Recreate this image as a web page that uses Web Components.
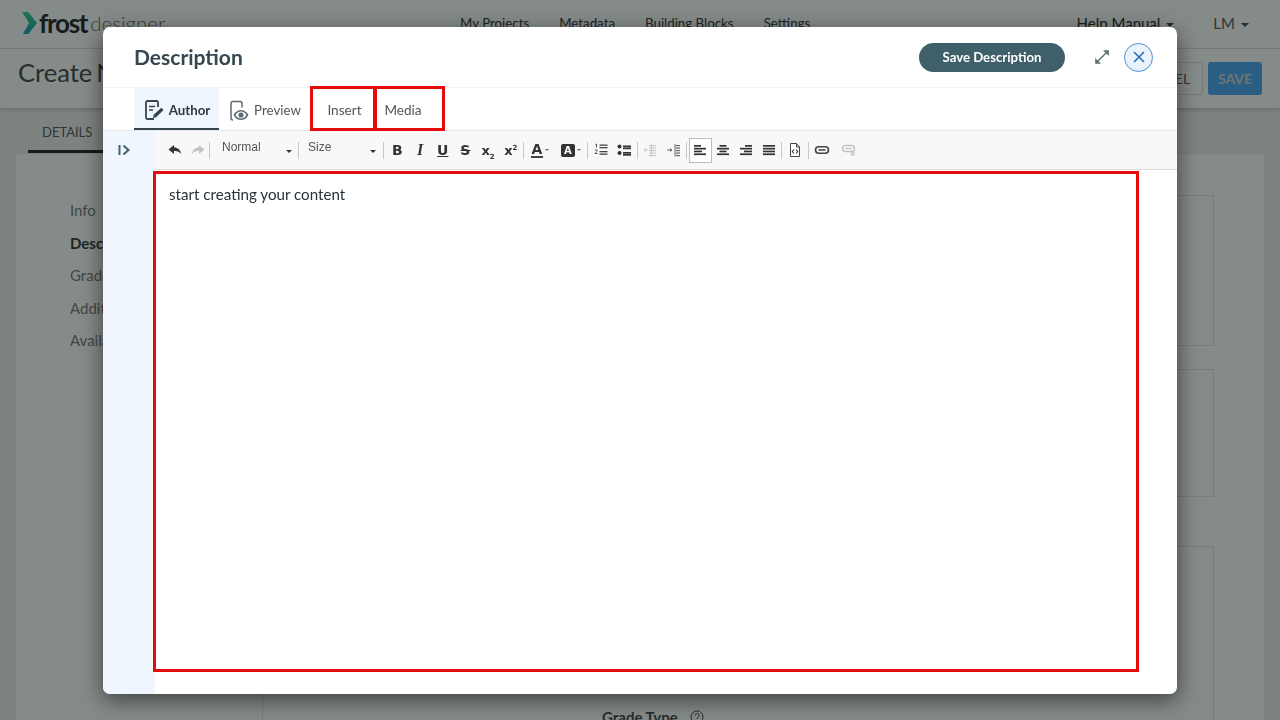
<!DOCTYPE html>
<html lang="en">
<head>
<meta charset="utf-8">
<title>Frost Designer</title>
<style>
html, body { margin: 0; height: 100%; overflow: hidden; }
body { font-family: Lato, "Liberation Sans", sans-serif; color: #333; }
</style>
</head>
<body>
<fd-backdrop-page></fd-backdrop-page>
<fd-scrim></fd-scrim>
<fd-modal heading="Description">
  <fd-editor-toolbar slot="toolbar"></fd-editor-toolbar>
  start creating your content
</fd-modal>

<script>
// small helper so every element just declares its html
class Base extends HTMLElement {
    html() { return "" }
    constructor() {
        super()
        this.attachShadow({ mode: "open" }).innerHTML = this.html()
    }
}

class BackdropPage extends Base {
    html() { return `
<style>
:host { display: flex; flex-direction: column; width: 1280px; height: 720px; overflow: hidden; background: #f1efef; position: relative; }
.top { display: flex; align-items: center; flex: none; background: #fff; border-bottom: 1px solid #dedede; padding: 0 31px 2px 22px; box-sizing: border-box; height: 49px; font-size: 13.300px; color: #333; }
.logo { display: flex; align-items: center; width: 438px; flex: none; }
.logo svg { margin-right: 1px; }
.frost { font-weight: 700; font-size: 26px; letter-spacing: -1.300px; color: #222; }
.designer { font-weight: 300; font-size: 20.500px; color: #666; margin-left: 3px; }
.nav { display: flex; gap: 30px; flex: 1; }
.help { margin-right: 39px; font-size: 15px; color: #222; }
.caret { display: inline-block; border: 4px solid transparent; border-top-color: #444; border-bottom: 0; margin-left: 6px; vertical-align: middle; }
.user { font-size: 15px; color: #555; }
.title { display: flex; align-items: center; height: 59px; flex: none; background: #fff; padding: 0 18px; box-shadow: 0 2px 4px rgba(0,0,0,.18); position: relative; }
h1 { flex: 1; margin: 0 0 14px; font-size: 25.500px; font-weight: 400; word-spacing: -2.500px; color: #444; }
.btn { height: 33px; box-sizing: border-box; display: flex; align-items: center; justify-content: center; border-radius: 3px; font-size: 14px; }
.cancel { width: 80px; border: 1px solid #ddd; color: #555; margin-right: 5px; }
.save { width: 54px; background: #4aa5f5; color: #d0d0d0; font-weight: 700; }
.tabs { height: 45px; flex: none; padding: 0 28px; display: flex; }
.tab { width: 240px; height: 37px; border-bottom: 3px solid #222; color: #555; font-size: 13px; display: flex; align-items: center; padding: 5px 0 0 14px; box-sizing: content-box; }
.panel { flex: 1; margin: 0 15px; background: #fff; border: 1px solid #eaeaea; display: flex; }
.side { width: 246px; flex: none; padding: 47px 0 0 54px; box-sizing: border-box; font-size: 15px; color: #777; display: flex; flex-direction: column; gap: 14.600px; }
.side b { color: #333; }
.content { flex: 1; padding: 41px 50px 0 0; display: flex; flex-direction: column; align-items: flex-end; }
.card { width: 952px; border: 1px solid #e2e2e2; box-sizing: border-box; flex: none; }
.grade { position: absolute; left: 602px; top: 708px; font-size: 15px; font-weight: 700; color: #444; display: flex; gap: 12px; align-items: center; }
</style>
<div class="top">
  <div class="logo">
    <svg width="16" height="22" viewBox="0 0 18 23" preserveAspectRatio="none">
      <defs><linearGradient id="lg" x1="0" y1="0" x2="0" y2="1"><stop offset="0" stop-color="#35d08a"/><stop offset="1" stop-color="#12a0b0"/></linearGradient></defs>
      <path d="M0 0h7l10 11.500L7 23H1l7-11.500z" fill="url(#lg)"/>
    </svg>
    <span class="frost">frost</span><span class="designer">designer</span>
  </div>
  <div class="nav"><span>My Projects</span><span>Metadata</span><span>Building Blocks</span><span>Settings</span></div>
  <span class="help">Help Manual<i class="caret"></i></span>
  <span class="user">LM<i class="caret"></i></span>
</div>
<div class="title">
  <h1>Create New</h1>
  <div class="btn cancel">CANCEL</div>
  <div class="btn save">SAVE</div>
</div>
<div class="tabs"><div class="tab">DETAILS</div></div>
<div class="panel">
  <div class="side"><span>Info</span><b>Description</b><span>Grade</span><span>Additional</span><span>Availability</span></div>
  <div class="content">
    <div class="card" style="height:151px"></div>
    <div class="card" style="height:128px;margin-top:23px"></div>
    <div class="card" style="height:200px;margin-top:49px"></div>
  </div>
</div>
<div class="grade">Grade Type
  <svg width="14" height="14" viewBox="0 0 14 14" fill="none" stroke="#444"><circle cx="7" cy="7" r="6"/><path d="M5 5.500a2 2 0 1 1 3 1.700c-.7.4-1 .8-1 1.600M7 10.200v1"/></svg>
</div>
`}
}
customElements.define("fd-backdrop-page", BackdropPage)

class Scrim extends Base {
    html() { return `<style>:host { display: block; position: fixed; inset: 0; background: rgba(12,24,20,.5); }</style>` }
}
customElements.define("fd-scrim", Scrim)

class Tab extends Base {
    html() { return `
<style>
:host { display: flex; align-items: center; justify-content: center; gap: 4px; height: 42px; box-sizing: border-box; font-size: 13.600px; color: #555; flex: none; }
:host([active]) { background: #eff6fd; color: #2b3a42; font-weight: 700; border-bottom: 2px solid #33444c; }
</style>
<slot name="icon"></slot><slot></slot>
`}
}
customElements.define("fd-tab", Tab)

class Modal extends Base {
    html() { return `
<style>
:host { display: flex; flex-direction: column; position: fixed; left: 103px; top: 27px; width: 1074px; height: 667px; background: #fff; border-radius: 7px; box-shadow: 0 6px 22px rgba(0,0,0,.55); overflow: hidden; }
header { display: flex; align-items: center; height: 61px; flex: none; box-sizing: border-box; padding: 0 24px 0 31px; border-bottom: 1px solid #f2f2f2; }
h2 { flex: 1; margin: 0 0 2px; font-size: 21px; font-weight: 700; color: #37474f; }
.pill { width: 146px; height: 29px; box-sizing: border-box; border: 0; border-radius: 15px; background: #3f5f6b; color: #fff; font: 700 13.200px Lato, sans-serif; padding: 0; margin-right: 2px; }
.expand { margin: 0 14px 0 27px; display: block; }
.close { width: 29px; height: 29px; box-sizing: border-box; border-radius: 50%; border: 1.500px solid #4a8fd0; background: #eaf3fc; display: flex; align-items: center; justify-content: center; }
nav { display: flex; height: 43px; flex: none; box-sizing: border-box; padding-left: 31px; border-bottom: 1px solid #e9e9e9; }
fd-tab { padding-top: 1px; }
.body { flex: 1; display: flex; min-height: 0; }
aside { width: 52px; flex: none; background: #eff6fe; padding: 13px 0 0 15px; box-sizing: border-box; }
aside svg { display: block; }
main { flex: 1; display: flex; flex-direction: column; min-width: 0; }
.text { flex: 1; padding: 15px 14px; font-size: 15.150px; line-height: 18px; color: #263238; }
.mark { position: absolute; box-sizing: border-box; border: 3px solid #e30b0b; pointer-events: none; }
</style>
<header>
  <h2></h2>
  <button class="pill">Save Description</button>
  <svg class="expand" width="16" height="16" viewBox="0 0 16 16" fill="none" stroke="#5f6f6f" stroke-width="1.500">
    <path d="M2 14 14 2"/>
    <path d="M9 1.200h5.800V7z" fill="#5f6f6f" stroke="none"/><path d="M1.200 9v5.800H7z" fill="#5f6f6f" stroke="none"/>
  </svg>
  <div class="close"><svg width="12" height="12" viewBox="0 0 12 12" stroke="#2a6fbb" stroke-width="1.600"><path d="M1 1l10 10M11 1 1 11"/></svg></div>
</header>
<nav>
  <fd-tab active style="width:85px;font-size:13.300px;padding-top:3px">
    <svg slot="icon" width="22" height="22" viewBox="0 0 22 22" fill="none" stroke="#37474f" stroke-width="1.800">
      <path d="M11 20H4.500A1.500 1.500 0 0 1 3 18.500V3.500A1.500 1.500 0 0 1 4.500 2h9A1.500 1.500 0 0 1 15 3.500V8"/>
      <path d="M6 7.500h6M6 11h4" stroke-width="1.400"/>
      <path d="M10 19l.7-3.200 7.600-7 2.200 2.200-7.300 7.200z" fill="#37474f" stroke="none"/>
    </svg>
    Author
  </fd-tab>
  <fd-tab style="width:91px;font-size:13.300px">
    <svg slot="icon" width="22" height="24" viewBox="0 0 22 24" fill="none" stroke="#5b6b70" stroke-width="1.500">
      <path d="M3 20V5.500A2 2 0 0 1 5 3.500h7a2 2 0 0 1 2 2v4"/>
      <path d="M5 22a2 2 0 0 1-2-2"/>
      <path d="M6.500 17c1.800-3 3.800-4.300 6.500-4.300s4.700 1.300 6.500 4.300c-1.800 3-3.800 4.300-6.500 4.300S8.300 20 6.500 17z" fill="#fff"/>
      <circle cx="13" cy="17" r="1.800" fill="#5b6b70"/>
    </svg>
    Preview
  </fd-tab>
  <fd-tab style="width:65px;padding-left:4px">Insert</fd-tab>
  <fd-tab style="width:56px;padding-left:0">Media</fd-tab>
</nav>
<div class="body">
  <aside>
    <svg width="13" height="12" viewBox="0 0 13 12" fill="none" stroke="#46606c" stroke-width="2"><path d="M1.500 1v10"/><path d="M5.500 1.500 10.500 6l-5 4.500" /></svg>
  </aside>
  <main>
    <slot name="toolbar"></slot>
    <div class="text"><slot></slot></div>
  </main>
</div>
<div class="mark" style="left:207px;top:59px;width:66px;height:45px"></div>
<div class="mark" style="left:271px;top:59px;width:71px;height:45px"></div>
<div class="mark" style="left:50px;top:144px;width:986px;height:501px"></div>
`}
    connectedCallback() {
        this.shadowRoot.querySelector("h2").textContent = this.getAttribute("heading")
    }
}
customElements.define("fd-modal", Modal)

// paths for the toolbar buttons, 16x16 box
const lines = (rows, c = "#333") => rows.map(([x, y, w, h]) => `<rect x="${x}" y="${y}" width="${w}" height="${h || 1.700}" fill="${c}"/>`).join("")
const ICONS = {
    undo: `<path d="M7 3 1.500 7.500 7 12V9c3-.3 5.500.6 7 3-.3-4-3-6.500-7-6.800z" fill="#333"/>`,
    redo: `<path d="M9 3l5.500 4.500L9 12V9c-3-.3-5.500.6-7 3 .3-4 3-6.500 7-6.800z" fill="#c4c4c4"/>`,
    ol: `<path d="M2.500 2.500 3.500 2v3.500M2 8.500c.5-1 2.500-1 2.300.3-.1.800-1.500 1.400-2.300 2.700h2.600" fill="none" stroke="#444" stroke-width=".9"/>` + lines([[6.500,2.500,8,1.300],[6.500,5,8,1.300],[6.500,9,8,1.300],[6.500,11.500,8,1.300]], "#444"),
    ul: `<circle cx="3.500" cy="4.500" r="2" fill="#333"/><circle cx="3.500" cy="11" r="2" fill="#333"/>` + lines([[7,3.500,8],[7,5.500,8],[7,10,8],[7,12,8]]),
    outdent: lines([[6,3,2,1.200],[6,5.500,2,1.200],[6,8,2,1.200],[6,10.500,2,1.200],[6,13,2,1.200],[9,3,4,1.200],[9,5.500,4,1.200],[9,8,4,1.200],[9,10.500,4,1.200],[9,13,4,1.200]], "#c8c8c8") + `<rect x="8" y="2" width="1" height="12.500" fill="#c8c8c8"/><path d="M1 8h4M1 8l2-1.500M1 8l2 1.500" stroke="#c8c8c8" fill="none"/>`,
    indent: lines([[10,3,4,1.200],[10,5.500,4,1.200],[10,8,4,1.200],[10,10.500,4,1.200],[10,13,4,1.200]], "#666") + `<rect x="8.500" y="2" width="1" height="12.500" fill="#666"/><path d="M1 8h5M6 8 4 6.500M6 8l-2 1.500" stroke="#666" fill="none"/>`,
    left: lines([[2,3,7],[2,5.800,12],[2,8.600,8],[2,11.400,12]]),
    center: lines([[4.500,3,7],[2,5.800,12],[4.500,8.600,7],[2,11.400,12]]),
    right: lines([[7,3,7],[2,5.800,12],[6,8.600,8],[2,11.400,12]]),
    justify: lines([[2,3,12],[2,5.800,12],[2,8.600,12],[2,11.400,12]]),
    source: `<path d="M3.500 1.500h6L12.500 5v9.500h-9z" fill="#fff" stroke="#444"/><path d="M9.500 1.500V5h3" fill="none" stroke="#444"/><path d="M7 7.500 5.300 9.500 7 11.500M9 7.500l1.700 2-1.700 2" fill="none" stroke="#333" stroke-width="1.100"/>`,
    link: `<rect x="1.500" y="4.700" width="13" height="6.500" rx="3.200" fill="none" stroke="#444" stroke-width="1.600"/><rect x="4.500" y="7.200" width="7" height="1.500" fill="#444"/>`,
    unlink: `<rect x="1.500" y="3.500" width="12" height="6" rx="3" fill="none" stroke="#c4c4c4" stroke-width="1.500"/><rect x="4.500" y="5.800" width="6" height="1.300" fill="#c4c4c4"/><path d="M10 10l3.500 3.500M13.500 10 10 13.500" stroke="#c4c4c4" stroke-width="1.300"/>`,
}

class EditorToolbar extends Base {
    html() {
        const icon = name => `<span class="b${name == "left" ? " on" : ""}"><svg width="16" height="16" viewBox="0 0 16 16">${ICONS[name]}</svg></span>`
        return `
<style>
:host { display: flex; align-items: center; height: 39px; box-sizing: border-box; padding: 0 0 0 8px; background: #f8f8f8; border-bottom: 1px solid #dcdcdc; color: #333; }
.b { width: 23px; height: 25px; box-sizing: border-box; display: flex; align-items: center; justify-content: center; flex: none; font-family: "DejaVu Sans", sans-serif; font-weight: 700; font-size: 14px; }
.t { width: 22.700px; }
.on { background: #fff; border: 1px solid #bdbdbd; }
.s { width: 1px; height: 17px; background: #c8c8c8; flex: none; margin-right: 2px; }
.combo { display: flex; justify-content: space-between; height: 25px; padding: 2px 7px 0 12px; box-sizing: border-box; font: 12px "Liberation Sans", Arial, sans-serif; color: #555; flex: none; margin-left: -2px; }
.combo i { border: 3px solid transparent; border-top-color: #333; border-bottom: 0; width: 0; height: 0; margin-top: 10px; }
.c { width: 26px; height: 25px; display: flex; align-items: center; justify-content: center; gap: 2px; flex: none; }
.c i { border: 2.500px solid transparent; border-top-color: #666; border-bottom: 0; }
.i { font: italic 700 16px "Liberation Serif", serif; }
.x { font-size: 13px; white-space: nowrap; }
sub, sup { font-size: 7px; line-height: 0; }
.ca { font: 700 14px "DejaVu Sans", sans-serif; border-bottom: 2px solid #444; line-height: 13px; padding: 0 1px; }
.cb { font: 700 10px "DejaVu Sans", sans-serif; background: #333; color: #fff; border-radius: 2px; width: 14px; height: 13px; display: flex; align-items: center; justify-content: center; }
</style>
${icon("undo")}${icon("redo")}<span class="s"></span>
<span class="combo" style="width:89px"><span>Normal</span><i></i></span><span class="s" style="margin-left:-1px"></span>
<span class="combo" style="width:84px;padding-left:9px"><span>Size</span><i></i></span><span class="s"></span>
<span class="b t">B</span><span class="b t i">I</span><span class="b t" style="text-decoration:underline">U</span><span class="b t" style="text-decoration:line-through">S</span><span class="b t x"><span>x<sub>2</sub></span></span><span class="b t x"><span>x<sup>2</sup></span></span><span class="s" style="margin-left:.8px"></span>
<span class="c" style="margin-left:1px"><span class="ca">A</span><i></i></span><span class="c" style="margin:0 3px 0 5px"><span class="cb">A</span><i></i></span><span class="s"></span>
${icon("ol")}${icon("ul")}<span class="s" style="margin-left:1px"></span>
${icon("outdent")}${icon("indent")}<span class="s"></span>
${icon("left")}${icon("center")}${icon("right")}${icon("justify")}<span class="s"></span>
${icon("source")}<span class="s" style="margin-left:1px"></span>
${icon("link")}<span style="width:4px"></span>${icon("unlink")}
`}
}
customElements.define("fd-editor-toolbar", EditorToolbar)
</script>
</body>
</html>
